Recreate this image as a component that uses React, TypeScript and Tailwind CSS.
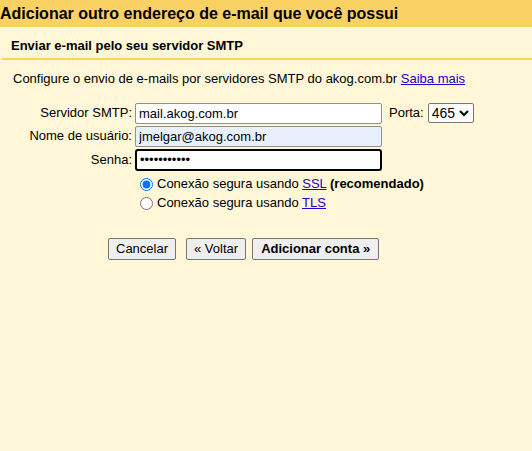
export default function App() {
  return (
    <div className="w-[532px] h-[451px] bg-[#fff7d7] text-[13px] text-black font-['Liberation_Sans',Arial,sans-serif]">
      <div className="h-[27px] bg-[#fad163] flex items-center">
        <h1 className="text-[16px] font-bold leading-none">Adicionar outro endereço de e-mail que você possui</h1>
      </div>
      <div className="pl-[11px] pt-[9px] h-[31px] font-bold">Enviar e-mail pelo seu servidor SMTP</div>
      <div className="ml-[2px] h-[2px] bg-[#fad163]" />
      <p className="pl-[13px] pt-[9px]">
        Configure o envio de e-mails por servidores SMTP do akog.com.br{" "}
        <a href="#" className="text-[#2200cc] underline">Saiba mais</a>
      </p>

      <div className="mt-[14px] grid grid-cols-[132px_auto] gap-x-[3px] gap-y-[2px] items-center">
        <label className="text-right">Servidor SMTP:</label>
        <div className="flex items-center">
          <input readOnly defaultValue="mail.akog.com.br"
            className="w-[247px] h-[21px] px-[3px] bg-white border border-[#8f8f8f] rounded-[2px] outline-none" />
          <span className="ml-[7px]">Porta:</span>
          <div className="ml-[4px] h-[20px] w-[46px] bg-white border border-[#767676] rounded-[2px] flex items-center justify-between pl-[3px] pr-[4px] text-[14px]">
            <span>465</span>
            <svg width="10" height="8" viewBox="0 0 10 8"><path d="M1 2l4 4 4-4" fill="none" stroke="black" strokeWidth="2" /></svg>
          </div>
        </div>
        <label className="text-right">Nome de usuário:</label>
        <input readOnly defaultValue="jmelgar@akog.com.br"
          className="w-[247px] h-[21px] px-[3px] bg-[#e8f0fe] border border-[#8f8f8f] rounded-[2px] outline-none" />
        <label className="text-right">Senha:</label>
        <input readOnly type="password" defaultValue="12345678901"
          className="w-[247px] h-[22px] px-[3px] bg-white border-2 border-black rounded-[3px] outline-none" />
      </div>

      <div className="ml-[135px] mt-[4px] flex flex-col">
        <label className="flex items-center h-[19px]">
          <input type="radio" name="sec" defaultChecked className="ml-[5px] mr-[4px] w-[13px] h-[13px] accent-[#0075ff]" />
          <span>Conexão segura usando <a href="#" className="text-[#2200cc] underline">SSL</a> <b>(recomendado)</b></span>
        </label>
        <label className="flex items-center h-[19px]">
          <input type="radio" name="sec" className="ml-[5px] mr-[4px] w-[13px] h-[13px]" />
          <span>Conexão segura usando <a href="#" className="text-[#2200cc] underline">TLS</a></span>
        </label>
      </div>

      <div className="ml-[108px] mt-[25px] flex gap-[9px]">
        <button className="h-[22px] px-[7px] bg-[#efefef] border border-[#767676] rounded-[2px]">Cancelar</button>
        <div className="flex gap-[6px] ml-[1px]">
          <button className="h-[22px] px-[7px] bg-[#efefef] border border-[#767676] rounded-[2px]">« Voltar</button>
          <button className="h-[22px] px-[8px] bg-[#efefef] border border-[#767676] rounded-[2px] font-bold">Adicionar conta »</button>
        </div>
      </div>
    </div>
  );
}
